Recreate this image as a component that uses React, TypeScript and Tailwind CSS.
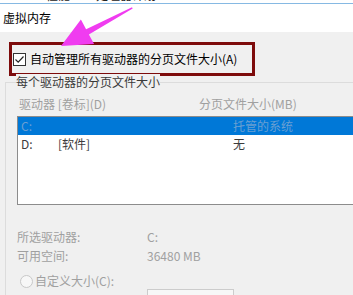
import React from "react";

const font = { fontFamily: '"Noto Sans CJK SC", "Noto Sans", sans-serif' };

export default function App() {
  return (
    <div
      className="relative w-[353px] h-[295px] overflow-hidden bg-[#f0f0f0] text-[12px] text-[#1e1e1e]"
      style={font}
    >
      {/* top strip remnants */}
      <div className="h-[3px] bg-white overflow-hidden">
        <div className="flex gap-[26px] pl-[46px] -mt-[12px] leading-[14px] text-[12px] text-[#222]">
          <span>性能</span>
          <span>处理器计划</span>
        </div>
      </div>
      <div className="h-px bg-[#86b9e3]" />
      {/* title */}
      <div className="h-[28px] bg-white flex items-center pl-[3px] text-[12px] text-black">
        虚拟内存
      </div>

      {/* highlighted checkbox */}
      <div className="mt-[10px] ml-[9px] w-[246px] h-[34px] border-[3px] border-[#7d0b0b] flex items-center pl-[1px]">
        <div className="w-[13px] h-[13px] border border-[#333] bg-white flex items-center justify-center">
          <svg width="11" height="11" viewBox="0 0 11 11">
            <path d="M1.5 5.5 L4.2 8.2 L9.5 2.5" fill="none" stroke="#222" strokeWidth="1.2" />
          </svg>
        </div>
        <span className="ml-[4px] leading-[16px] text-black">自动管理所有驱动器的分页文件大小(A)</span>
      </div>

      {/* group box */}
      <div className="relative mt-[6px] ml-[5px] border-t border-l border-[#dcdcdc] pl-[11px] pb-[20px]">
        <span className="absolute -top-[9px] left-[10px] bg-[#f0f0f0] leading-[16px] text-[#3a3a3a]">
          每个驱动器的分页文件大小
        </span>
        <div className="mt-[13px] flex leading-[16px] text-[#a0a0a0]">
          <span className="pl-[2px] w-[182px]">驱动器 [卷标](D)</span>
          <span>分页文件大小(MB)</span>
        </div>
        <div className="mt-[4px] w-[400px] h-[89px] border border-[#8c8c8c] bg-white">
          <div className="h-[18px] bg-[#0078d7] flex items-center leading-[16px] text-[#6a9fd2]">
            <span className="pl-[3px] w-[215px]">C:</span>
            <span>托管的系统</span>
          </div>
          <div className="h-[18px] flex items-center leading-[16px] text-[#3c3c3c]">
            <span className="pl-[3px] w-[40px]">D:</span>
            <span className="w-[175px]">[软件]</span>
            <span>无</span>
          </div>
        </div>
        <div className="mt-[22px] text-[#a0a0a0] leading-[19px]">
          <div className="flex">
            <span className="w-[130px]">所选驱动器:</span>
            <span>C:</span>
          </div>
          <div className="flex">
            <span className="w-[130px]">可用空间:</span>
            <span>36480 MB</span>
          </div>
        </div>
        <div className="mt-[8px] h-[16px] flex items-center text-[#a0a0a0] leading-[16px]">
          <div className="ml-[3px] w-[13px] h-[13px] rounded-full border border-[#c8c8c8] bg-[#f7f7f7]" />
          <span className="ml-[2px]">自定义大小(C):</span>
        </div>
        <div className="ml-[130px] w-[87px] h-[22px] border border-[#cccccc] bg-[#f7f7f7]" />
      </div>

      {/* annotation arrow */}
      <svg className="absolute left-0 top-0" width="353" height="295" viewBox="0 0 353 295">
        <polygon
          points="61,46 80.9,19.5 86.1,29.2 132,7.3 132.7,8.6 88.9,34.4 94.1,44.1"
          fill="#f03cf0"
        />
      </svg>
    </div>
  );
}
